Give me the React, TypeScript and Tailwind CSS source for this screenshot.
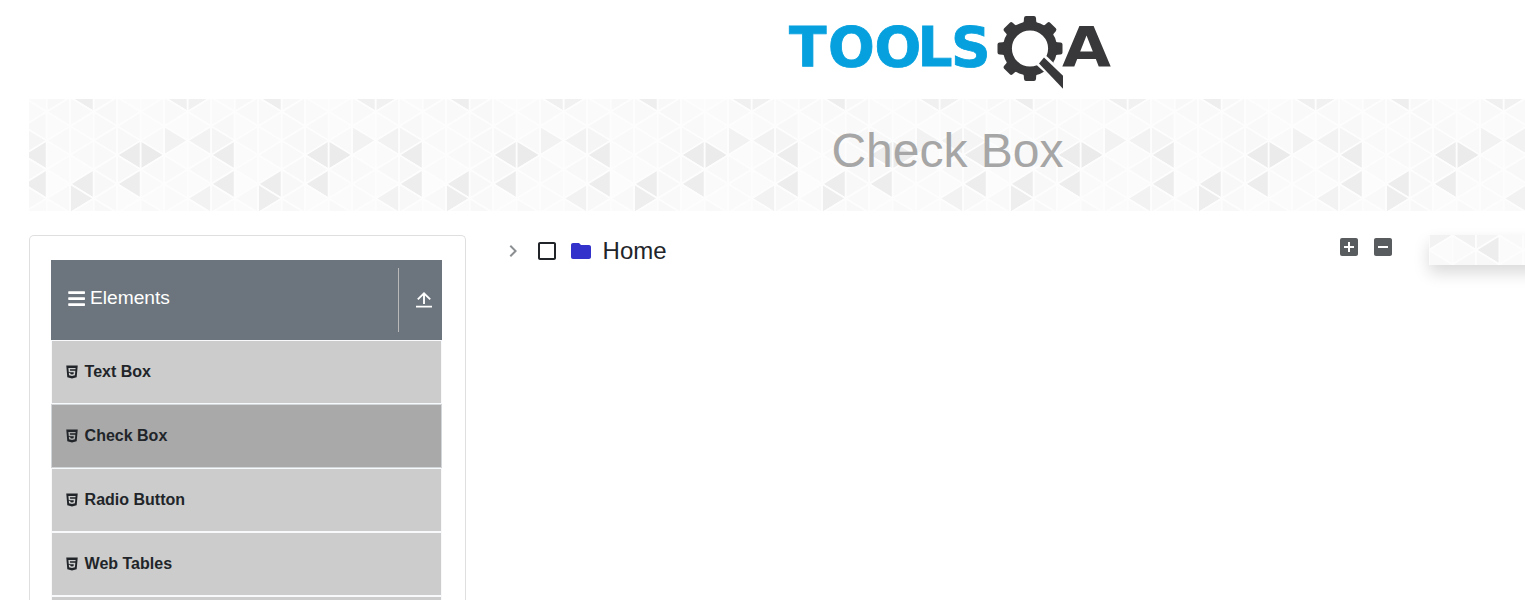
import React from "react";
import { AiFillHtml5 } from "react-icons/ai";
import { FaBars } from "react-icons/fa";
import {
  MdAddBox,
  MdCheckBoxOutlineBlank,
  MdChevronRight,
  MdFolder,
  MdIndeterminateCheckBox,
} from "react-icons/md";

const STEP_X = 23.5;
const STEP_Y = 14.45;

// One entry per vertical strip, one grey level per triangle from top to bottom.
const SHADES: string[][] = [
  ["f8", "f9", "fb", "f9", "fb", "fa", "fc", "f9", "fb"],
  ["ee", "f9", "fa", "fa", "f9", "fb", "ed", "ee", "fa"],
  ["f8", "f8", "f9", "f8", "f9", "f8", "f8", "f9", "f8"],
  ["fb", "fa", "f9", "f8", "ec", "f8", "ed", "fb", "fb"],
  ["fb", "fa", "fb", "f9", "eb", "f9", "fa", "fb", "f9"],
  ["f0", "f9", "fb", "f2", "fb", "f9", "fa", "fa", "fb"],
  ["f1", "f9", "fa", "f2", "fa", "f8", "fb", "f2", "fa"],
  ["fa", "fa", "f8", "f5", "ed", "f8", "ed", "f8", "fa"],
];

function TrianglePattern({ width, height, originX, originY }: { width: number; height: number; originX: number; originY: number }) {
  const shapes: React.ReactNode[] = [];
  const first = Math.floor(-originX / STEP_X) - 1;
  const last = Math.ceil((width - originX) / STEP_X);
  for (let i = first; i <= last; i++) {
    const strip = ((i % 8) + 8) % 8;
    SHADES[strip].forEach((v, k) => {
      const cy = originY + k * STEP_Y;
      const left = originX + i * STEP_X;
      const right = left + STEP_X;
      const apexLeft = (strip + k) % 2 === 1;
      const apex = apexLeft ? left : right;
      const base = apexLeft ? right : left;
      shapes.push(
        <polygon
          key={`${i}:${k}`}
          points={`${apex},${cy} ${base},${cy - STEP_Y} ${base},${cy + STEP_Y}`}
          fill={`#${v}${v}${v}`}
          stroke="#fdfdfd"
          strokeWidth="1.7"
        />,
      );
    });
  }
  return (
    <svg width={width} height={height} className="block bg-[#fafafa]">
      {shapes}
    </svg>
  );
}

function Logo() {
  return (
    <svg width="324" height="80" viewBox="787 12 324 80" className="block">
      <text
        x="789 828 874.5 917.5 951"
        y="66"
        fill="#06a0de"
        stroke="#06a0de"
        strokeWidth="0.8"
        className="font-['DejaVu_Sans'] text-[55px] font-bold"
      >
        TOOLS
      </text>
      <g fill="#38383a">
        {[0, 45, 90, 135, 180, 225, 270, 315].map((a) => (
          <path key={a} transform={`rotate(${a} 1030 48.5)`} d="M1019.5 25.5 Q1023.6 24 1023.8 21 L1024 18 Q1024.2 16 1026 16 L1034 16 Q1035.8 16 1036 18 L1036.2 21 Q1036.4 24 1040.5 25.5 Z" />
        ))}
        <circle cx="1030" cy="48.5" r="22.6" fill="none" stroke="#38383a" strokeWidth="9" />
      </g>
      <path d="M1046.5 56 L1066 75 L1066 92 L1035.5 64 L1040 60 Z" fill="#fff" />
      <path d="M1044 57.5 L1063 75.7 L1063 88.7 L1039 63.5 Z" fill="#38383a" />
      <text x="1062" y="66" textLength="49" lengthAdjust="spacingAndGlyphs" fill="#38383a" className="font-['DejaVu_Sans'] text-[56px] font-bold">
        A
      </text>
    </svg>
  );
}

function UploadIcon() {
  return (
    <svg width="16" height="18" viewBox="0 0 16 18" fill="none" stroke="#fff" strokeWidth="1.9" className="block">
      <path d="M8 13V2.4M1.8 8.4L8 2.4l6.2 6M0 15.6h16" />
    </svg>
  );
}

const ITEMS = ["Text Box", "Check Box", "Radio Button", "Web Tables"];

function MenuItem({ label, active }: { label: string; active: boolean }) {
  return (
    <li
      className={
        "flex h-16 items-center border pl-3 text-base font-bold text-[#212529] " +
        (active ? "border-[#d3d6d9] bg-[#a9a9a9]" : "border-[#f8f9fa] bg-[#ccc]")
      }
    >
      <AiFillHtml5 className="size-4" />
      <span className="ml-[4.6px]">{label}</span>
    </li>
  );
}

export default function App() {
  return (
    <div className="h-[600px] w-[1525px] overflow-hidden bg-white font-['Liberation_Sans',sans-serif] text-[#212529]">
      <header className="flex h-[99px] pt-3 pl-[787px]">
        <Logo />
      </header>
      <div className="ml-[29px] grid h-28 w-[1496px]">
        <div className="col-start-1 row-start-1">
          <TrianglePattern width={1496} height={112} originX={17.7} originY={-1.7} />
        </div>
        <h1 className="col-start-1 row-start-1 pt-4 pl-[802.4px] text-[48px] leading-[72px] text-[#a6a6a6]">Check Box</h1>
      </div>
      <main className="mt-6 ml-[29px] flex">
        <aside className="h-[365px] w-[437px] shrink-0 overflow-hidden rounded-t-[5px] border border-b-0 border-[#dfdfdf] pt-6 pl-[21px]">
          <div className="flex h-20 w-[391px] bg-[#6c757d] py-2 text-white">
            <div className="flex w-[347px] items-start pt-[20px] pl-[15.5px] text-[19.2px] leading-5">
              <FaBars className="mt-[1px] size-[19.2px] shrink-0" />
              <span className="ml-[4.3px]">Elements</span>
            </div>
            <div className="flex flex-1 border-l border-[#b9b9b9] pt-[23px] pl-[17px]">
              <UploadIcon />
            </div>
          </div>
          <ul className="w-[391px]">
            {ITEMS.map((label) => (
              <MenuItem key={label} label={label} active={label === "Check Box"} />
            ))}
            <li className="h-4 border border-b-0 border-[#f8f9fa] bg-[#ccc]" />
          </ul>
        </aside>
        <section className="ml-[35px] flex w-[894px] shrink-0 items-start justify-between">
          <div className="flex h-8 items-center">
            <MdChevronRight className="size-6 text-[#8c8f92]" />
            <MdCheckBoxOutlineBlank className="ml-2.5 size-6" />
            <MdFolder className="ml-2.5 size-6 text-[#33c]" />
            <span className="ml-[9.6px] text-2xl leading-8">Home</span>
          </div>
          <div className="flex gap-2.5 text-[#595c5f]">
            <MdAddBox className="size-6" />
            <MdIndeterminateCheckBox className="size-6" />
          </div>
        </section>
        <div className="ml-[34px] h-[30px] w-[120px] shrink-0 shadow-[0_8px_16px_rgba(0,0,0,0.15)]">
          <TrianglePattern width={120} height={30} originX={-117.5} originY={-42.8} />
        </div>
      </main>
    </div>
  );
}
